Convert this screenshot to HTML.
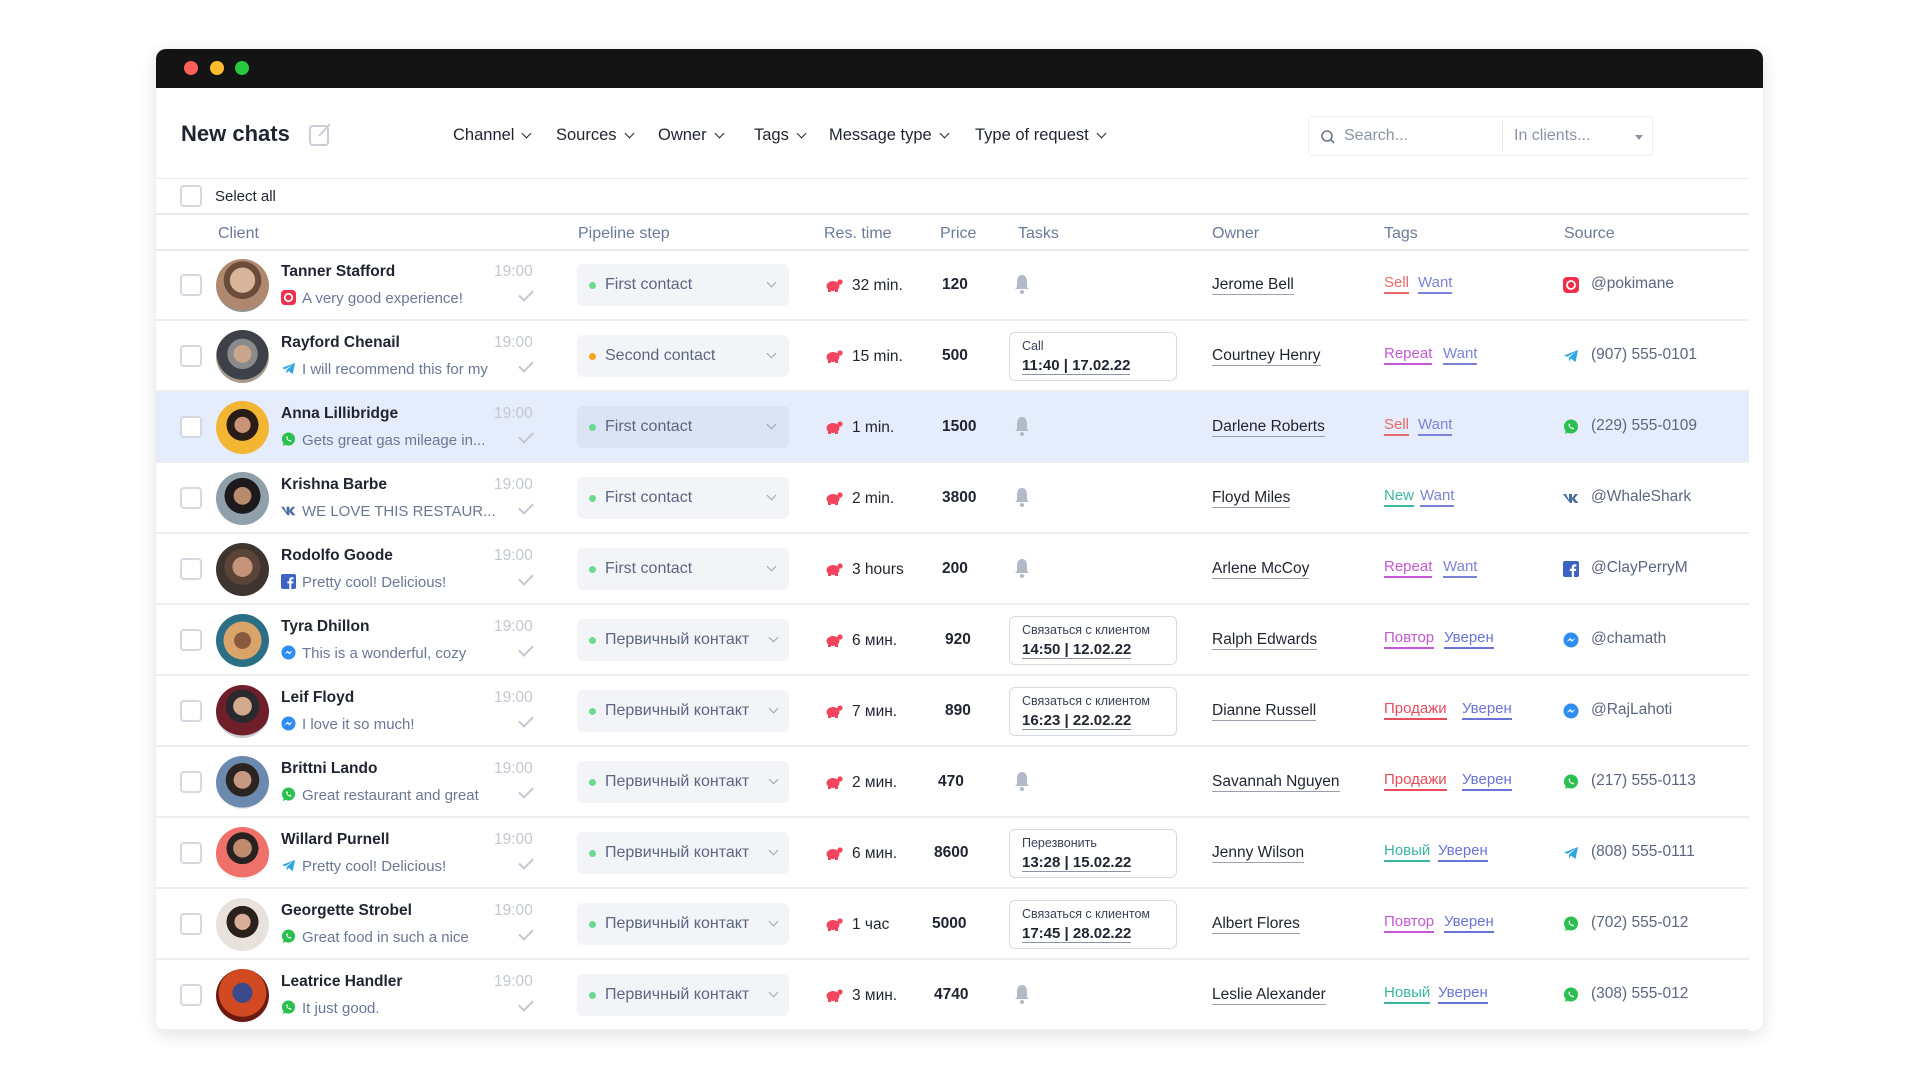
<!DOCTYPE html>
<html><head><meta charset="utf-8"><style>
*{margin:0;padding:0;box-sizing:border-box}
body{width:1920px;height:1080px;background:#fff;font-family:"Liberation Sans","DejaVu Sans",sans-serif;position:relative;overflow:hidden;color:#1f2430}
.win{position:absolute;left:156px;top:49px;width:1607px;height:982px;background:#fff;border-radius:10px;box-shadow:0 4px 18px rgba(0,0,0,.12);overflow:hidden}
.bar{position:absolute;left:0;top:0;width:100%;height:39px;background:#141414}
.dot{position:absolute;top:12px;width:14px;height:14px;border-radius:50%}
.a{position:absolute;white-space:nowrap}
.hl{position:absolute;left:0;width:1593px;height:1px;background:#e8eaef}
.f{font-size:16.5px;color:#1f2430;top:77px}
.f:after{content:"";display:inline-block;width:6px;height:6px;border-right:1.8px solid #1f2430;border-bottom:1.8px solid #1f2430;transform:rotate(45deg);margin-left:9px;position:relative;top:-3px}
.th{font-size:16px;color:#6b7a99;top:176px}
.row{position:absolute;left:0;width:1593px;height:71px;border-bottom:2px solid #eceef2}
.row.sel{background:#e5edfc}
.cb{position:absolute;left:24px;top:24px;width:22px;height:22px;border:2px solid #d4d8e0;border-radius:4px;background:#fff}
.av{position:absolute;left:60px;top:9px;width:53px;height:53px;border-radius:50%}
.nm{left:125px;top:13px;font-size:15.5px;font-weight:bold;color:#1f2430}
.tm{left:338px;top:13px;font-size:15.5px;color:#c2c7d2}
.ms{left:125px;top:40px;font-size:15px;color:#6b7794}
.ck{left:363px;top:40px;width:14px;height:8px;border-left:2px solid #c2c7d2;border-bottom:2px solid #c2c7d2;transform:rotate(-45deg)}
.pp{position:absolute;left:421px;top:14px;width:212px;height:42px;background:#f3f4f7;border-radius:6px;font-size:16px;color:#5c6680;padding:12px 0 0 28px;white-space:nowrap}
.sel .pp{background:#dbe4f5}
.pp:before{content:"";position:absolute;left:12px;top:18px;width:7px;height:7px;border-radius:50%;background:#6cd991}
.pp.o:before{background:#f5a623}
.pp:after{content:"";position:absolute;right:14px;top:15px;width:6px;height:6px;border-right:1.5px solid #9aa2b4;border-bottom:1.5px solid #9aa2b4;transform:rotate(45deg)}
.pp.r:after{right:12px}
.tu{position:absolute;left:669px;top:28px;width:18px;height:14px}
.rt{left:696px;top:27px;font-size:15.5px;color:#1f2430}
.pr{left:786px;top:26px;font-size:15.5px;font-weight:bold;color:#1f2430}
.bl{position:absolute;left:859px;top:24px;width:14px;height:20px}
.tb{position:absolute;left:853px;top:11px;width:168px;height:49px;border:1.5px solid #d6dae3;border-radius:6px;background:#fff}
.tb .l{position:absolute;left:12px;top:6px;font-size:12.5px;color:#3a4255;white-space:nowrap}
.tb .d{position:absolute;left:12px;top:24px;font-size:15px;font-weight:bold;color:#1f2430;border-bottom:1.5px solid #8d94a5;line-height:17px;white-space:nowrap}
.ow{left:1056px;top:26px;font-size:15.5px;color:#1f2430;border-bottom:1.5px solid #9aa0ae;line-height:18px}
.tg{top:24px;font-size:15px;line-height:18px;border-bottom:2px solid}
.si{position:absolute;left:1407px;top:27px;width:16px;height:16px}
.st{left:1435px;top:25px;font-size:15.5px;color:#5c6680}
</style></head><body>
<div class="win">
<div class="bar"><div class="dot" style="left:28px;background:#ff5f57"></div><div class="dot" style="left:54px;background:#febc2e"></div><div class="dot" style="left:79px;background:#28c840"></div></div>
<div class="a" style="left:25px;top:72px;font-size:22px;font-weight:bold;color:#1f2430">New chats</div>
<svg class="a" style="left:152px;top:72px" width="26" height="26" viewBox="0 0 26 26"><rect x="2" y="5" width="18" height="19" rx="3" fill="none" stroke="#c8cdd7" stroke-width="2"/><path d="M11 15 L22 3" stroke="#c8cdd7" stroke-width="2"/></svg>
<div class="a f" style="left:297px">Channel</div>
<div class="a f" style="left:400px">Sources</div>
<div class="a f" style="left:502px">Owner</div>
<div class="a f" style="left:598px">Tags</div>
<div class="a f" style="left:673px">Message type</div>
<div class="a f" style="left:819px">Type of request</div>
<div class="a" style="left:1152px;top:67px;width:345px;height:40px;border:1px solid #eceef2;border-radius:4px"></div>
<svg class="a" style="left:1164px;top:80px" width="16" height="16" viewBox="0 0 16 16"><circle cx="7" cy="7" r="5" fill="none" stroke="#6b7589" stroke-width="1.6"/><path d="M11 11 L14 14" stroke="#6b7589" stroke-width="1.6"/></svg>
<div class="a" style="left:1188px;top:78px;font-size:16px;color:#8a93a6">Search...</div>
<div class="a" style="left:1346px;top:72px;width:1px;height:30px;background:#e6e8ee"></div>
<div class="a" style="left:1358px;top:78px;font-size:16px;color:#8a93a6">In clients...</div>
<div class="a" style="left:1479px;top:86px;border:4px solid transparent;border-top:5px solid #8a93a6"></div>
<div class="hl" style="top:129px"></div>
<div class="a cb" style="left:24px;top:136px;position:absolute"></div>
<div class="a" style="left:59px;top:139px;font-size:15px;color:#1f2430">Select all</div>
<div class="hl" style="top:164px;height:2px"></div>
<div class="a th" style="left:62px">Client</div>
<div class="a th" style="left:422px">Pipeline step</div>
<div class="a th" style="left:668px">Res. time</div>
<div class="a th" style="left:784px">Price</div>
<div class="a th" style="left:862px">Tasks</div>
<div class="a th" style="left:1056px">Owner</div>
<div class="a th" style="left:1228px">Tags</div>
<div class="a th" style="left:1408px">Source</div>
<div class="hl" style="top:200px;height:2px"></div>

<svg width="0" height="0" style="position:absolute"><defs>
<symbol id="tu" viewBox="0 0 18 14"><ellipse cx="8" cy="8" rx="6.5" ry="5" fill="#f0455d"/><circle cx="15" cy="4" r="2.6" fill="#f0455d"/><rect x="3" y="10" width="3" height="4" fill="#f0455d"/><rect x="10" y="10" width="3" height="4" fill="#f0455d"/></symbol>
<symbol id="bl" viewBox="0 0 14 20"><path d="M7 1 C3 1 2 5 2 8 L2 13 L0 15 L14 15 L12 13 L12 8 C12 5 11 1 7 1Z" fill="#b2b9c7"/><circle cx="7" cy="18" r="2" fill="#b2b9c7"/></symbol>
<symbol id="tg" viewBox="0 0 16 16"><path d="M1 7.5 L15 2 L12.5 14 L8 10.5 L6 13.5 L6 9.5 L13 3.5 L4.5 8.8Z" fill="#2ea6e0"/></symbol>
<symbol id="wa" viewBox="0 0 16 16"><circle cx="8" cy="7.5" r="7" fill="#2bc04e"/><path d="M2 15 L3 11 L6 13Z" fill="#2bc04e"/><path d="M5.5 5 Q5.5 9.5 10.5 10.5 L11 9 L9.5 8.3 L9 9 Q7 8 6.8 6.5 L7.5 6 L6.8 4.5Z" fill="#fff"/></symbol>
<symbol id="ig" viewBox="0 0 16 16"><rect width="16" height="16" rx="4" fill="#f0304a"/><circle cx="8" cy="8" r="4" fill="none" stroke="#fff" stroke-width="1.8"/></symbol>
<symbol id="vk" viewBox="0 0 16 16"><path d="M0 4 L3 4 L6 10 L6 4 L9 4 L9 8 L12 4 L15 4 L11.5 8.5 L15.5 13 L12 13 L9 9.5 L9 13 L7 13 Z" fill="#4a6aa0"/></symbol>
<symbol id="fb" viewBox="0 0 16 16"><rect width="16" height="16" rx="2" fill="#3b62c4"/><path d="M11 16 L11 10 L13 10 L13.3 7.8 L11 7.8 L11 6.5 Q11 5.5 12 5.5 L13.4 5.5 L13.4 3.5 Q12.6 3.4 11.7 3.4 Q8.8 3.4 8.8 6.2 L8.8 7.8 L6.8 7.8 L6.8 10 L8.8 10 L8.8 16Z" fill="#fff"/></symbol>
<symbol id="ms" viewBox="0 0 16 16"><circle cx="8" cy="8" r="7.5" fill="#2f8cf0"/><path d="M3.5 10 L7 6 L9 8 L12.5 6 L9 10 L7 8Z" fill="#fff"/></symbol>
</defs></svg>

<div class="row" style="top:201px">
<div class="cb"></div><div class="av" style="background:radial-gradient(circle at 50% 40%,#d8b49a 0 30%,#6b4b3a 31% 45%,#b08870 46% 70%,#9a9088 71%)"></div>
<div class="a nm">Tanner Stafford</div><div class="a tm">19:00</div>
<div class="a ms"><svg width="15" height="15" style="vertical-align:-2px;margin-right:6px"><use href="#ig"/></svg>A very good experience!</div><div class="a ck"></div>
<div class="pp">First contact</div>
<svg class="tu"><use href="#tu"/></svg><div class="a rt">32 min.</div><div class="a pr">120</div>
<svg class="bl"><use href="#bl"/></svg>
<div class="a ow">Jerome Bell</div>
<div class="a tg" style="left:1228px;color:#e86a6a">Sell</div><div class="a tg" style="left:1262px;color:#7b83d6">Want</div>
<svg class="si"><use href="#ig"/></svg><div class="a st">@pokimane</div>
</div>

<div class="row" style="top:272px">
<div class="cb"></div><div class="av" style="background:radial-gradient(circle at 50% 45%,#c9a58c 0 22%,#8a8a8a 23% 38%,#3e4248 39% 65%,#a89a8e 66%)"></div>
<div class="a nm">Rayford Chenail</div><div class="a tm">19:00</div>
<div class="a ms"><svg width="15" height="15" style="vertical-align:-2px;margin-right:6px"><use href="#tg"/></svg>I will recommend this for my</div><div class="a ck"></div>
<div class="pp o">Second contact</div>
<svg class="tu"><use href="#tu"/></svg><div class="a rt">15 min.</div><div class="a pr">500</div>
<div class="tb"><div class="l">Call</div><div class="d">11:40 | 17.02.22</div></div>
<div class="a ow">Courtney Henry</div>
<div class="a tg" style="left:1228px;color:#c558d6">Repeat</div><div class="a tg" style="left:1287px;color:#7b83d6">Want</div>
<svg class="si"><use href="#tg"/></svg><div class="a st">(907) 555-0101</div>
</div>

<div class="row sel" style="top:343px">
<div class="cb"></div><div class="av" style="background:radial-gradient(circle at 50% 45%,#c89478 0 20%,#2a1d18 21% 40%,#f2b632 41%)"></div>
<div class="a nm">Anna Lillibridge</div><div class="a tm">19:00</div>
<div class="a ms"><svg width="15" height="15" style="vertical-align:-2px;margin-right:6px"><use href="#wa"/></svg>Gets great gas mileage in...</div><div class="a ck"></div>
<div class="pp">First contact</div>
<svg class="tu"><use href="#tu"/></svg><div class="a rt">1 min.</div><div class="a pr">1500</div>
<svg class="bl"><use href="#bl"/></svg>
<div class="a ow">Darlene Roberts</div>
<div class="a tg" style="left:1228px;color:#e86a6a">Sell</div><div class="a tg" style="left:1262px;color:#7b83d6">Want</div>
<svg class="si"><use href="#wa"/></svg><div class="a st">(229) 555-0109</div>
</div>

<div class="row" style="top:414px">
<div class="cb"></div><div class="av" style="background:radial-gradient(circle at 50% 45%,#b88a6c 0 22%,#1c1a1c 23% 45%,#8fa0aa 46%)"></div>
<div class="a nm">Krishna Barbe</div><div class="a tm">19:00</div>
<div class="a ms"><svg width="15" height="15" style="vertical-align:-2px;margin-right:6px"><use href="#vk"/></svg>WE LOVE THIS RESTAUR...</div><div class="a ck"></div>
<div class="pp">First contact</div>
<svg class="tu"><use href="#tu"/></svg><div class="a rt">2 min.</div><div class="a pr">3800</div>
<svg class="bl"><use href="#bl"/></svg>
<div class="a ow">Floyd Miles</div>
<div class="a tg" style="left:1228px;color:#3bb5a0">New</div><div class="a tg" style="left:1264px;color:#7b83d6">Want</div>
<svg class="si"><use href="#vk"/></svg><div class="a st">@WhaleShark</div>
</div>

<div class="row" style="top:485px">
<div class="cb"></div><div class="av" style="background:radial-gradient(circle at 50% 45%,#c49378 0 25%,#5a4438 26% 45%,#3e3530 46%)"></div>
<div class="a nm">Rodolfo Goode</div><div class="a tm">19:00</div>
<div class="a ms"><svg width="15" height="15" style="vertical-align:-2px;margin-right:6px"><use href="#fb"/></svg>Pretty cool! Delicious!</div><div class="a ck"></div>
<div class="pp">First contact</div>
<svg class="tu"><use href="#tu"/></svg><div class="a rt">3 hours</div><div class="a pr">200</div>
<svg class="bl"><use href="#bl"/></svg>
<div class="a ow">Arlene McCoy</div>
<div class="a tg" style="left:1228px;color:#c558d6">Repeat</div><div class="a tg" style="left:1287px;color:#7b83d6">Want</div>
<svg class="si"><use href="#fb"/></svg><div class="a st">@ClayPerryM</div>
</div>

<div class="row" style="top:556px">
<div class="cb"></div><div class="av" style="background:radial-gradient(circle at 50% 50%,#8a5a40 0 22%,#d9a36a 23% 50%,#2a6f86 51%)"></div>
<div class="a nm">Tyra Dhillon</div><div class="a tm">19:00</div>
<div class="a ms"><svg width="15" height="15" style="vertical-align:-2px;margin-right:6px"><use href="#ms"/></svg>This is a wonderful, cozy</div><div class="a ck"></div>
<div class="pp r">Первичный контакт</div>
<svg class="tu"><use href="#tu"/></svg><div class="a rt">6 мин.</div><div class="a pr" style="left:789px">920</div>
<div class="tb"><div class="l">Связаться с клиентом</div><div class="d">14:50 | 12.02.22</div></div>
<div class="a ow">Ralph Edwards</div>
<div class="a tg" style="left:1228px;color:#c558d6">Повтор</div><div class="a tg" style="left:1288px;color:#6a73d8">Уверен</div>
<svg class="si"><use href="#ms"/></svg><div class="a st">@chamath</div>
</div>

<div class="row" style="top:627px">
<div class="cb"></div><div class="av" style="background:radial-gradient(circle at 50% 40%,#d2a88e 0 22%,#2a2a2e 23% 40%,#6e1f2a 41% 70%,#c7cdd2 71%)"></div>
<div class="a nm">Leif Floyd</div><div class="a tm">19:00</div>
<div class="a ms"><svg width="15" height="15" style="vertical-align:-2px;margin-right:6px"><use href="#ms"/></svg>I love it so much!</div><div class="a ck"></div>
<div class="pp r">Первичный контакт</div>
<svg class="tu"><use href="#tu"/></svg><div class="a rt">7 мин.</div><div class="a pr" style="left:789px">890</div>
<div class="tb"><div class="l">Связаться с клиентом</div><div class="d">16:23 | 22.02.22</div></div>
<div class="a ow">Dianne Russell</div>
<div class="a tg" style="left:1228px;color:#e64c5c">Продажи</div><div class="a tg" style="left:1306px;color:#6a73d8">Уверен</div>
<svg class="si"><use href="#ms"/></svg><div class="a st">@RajLahoti</div>
</div>

<div class="row" style="top:698px">
<div class="cb"></div><div class="av" style="background:radial-gradient(circle at 50% 45%,#c69a80 0 22%,#2c2420 23% 42%,#6c8ab0 43% 70%,#e8e6e2 71%)"></div>
<div class="a nm">Brittni Lando</div><div class="a tm">19:00</div>
<div class="a ms"><svg width="15" height="15" style="vertical-align:-2px;margin-right:6px"><use href="#wa"/></svg>Great restaurant and great</div><div class="a ck"></div>
<div class="pp r">Первичный контакт</div>
<svg class="tu"><use href="#tu"/></svg><div class="a rt">2 мин.</div><div class="a pr" style="left:782px">470</div>
<svg class="bl"><use href="#bl"/></svg>
<div class="a ow">Savannah Nguyen</div>
<div class="a tg" style="left:1228px;color:#e64c5c">Продажи</div><div class="a tg" style="left:1306px;color:#6a73d8">Уверен</div>
<svg class="si"><use href="#wa"/></svg><div class="a st">(217) 555-0113</div>
</div>

<div class="row" style="top:769px">
<div class="cb"></div><div class="av" style="background:radial-gradient(circle at 50% 40%,#c08a6c 0 22%,#2a2220 23% 38%,#f0706a 39% 70%,#f4f4f4 71%)"></div>
<div class="a nm">Willard Purnell</div><div class="a tm">19:00</div>
<div class="a ms"><svg width="15" height="15" style="vertical-align:-2px;margin-right:6px"><use href="#tg"/></svg>Pretty cool! Delicious!</div><div class="a ck"></div>
<div class="pp r">Первичный контакт</div>
<svg class="tu"><use href="#tu"/></svg><div class="a rt">6 мин.</div><div class="a pr" style="left:778px">8600</div>
<div class="tb"><div class="l">Перезвонить</div><div class="d">13:28 | 15.02.22</div></div>
<div class="a ow">Jenny Wilson</div>
<div class="a tg" style="left:1228px;color:#3bb5a0">Новый</div><div class="a tg" style="left:1282px;color:#6a73d8">Уверен</div>
<svg class="si"><use href="#tg"/></svg><div class="a st">(808) 555-0111</div>
</div>

<div class="row" style="top:840px">
<div class="cb"></div><div class="av" style="background:radial-gradient(circle at 50% 45%,#d8b09a 0 20%,#2a201c 21% 40%,#e8e2dc 41%)"></div>
<div class="a nm">Georgette Strobel</div><div class="a tm">19:00</div>
<div class="a ms"><svg width="15" height="15" style="vertical-align:-2px;margin-right:6px"><use href="#wa"/></svg>Great food in such a nice</div><div class="a ck"></div>
<div class="pp r">Первичный контакт</div>
<svg class="tu"><use href="#tu"/></svg><div class="a rt">1 час</div><div class="a pr" style="left:776px">5000</div>
<div class="tb"><div class="l">Связаться с клиентом</div><div class="d">17:45 | 28.02.22</div></div>
<div class="a ow">Albert Flores</div>
<div class="a tg" style="left:1228px;color:#c558d6">Повтор</div><div class="a tg" style="left:1288px;color:#6a73d8">Уверен</div>
<svg class="si"><use href="#wa"/></svg><div class="a st">(702) 555-012</div>
</div>

<div class="row" style="top:911px">
<div class="cb"></div><div class="av" style="background:radial-gradient(circle at 50% 45%,#3a4a8a 0 25%,#d24a22 26% 60%,#6a1a10 61%)"></div>
<div class="a nm">Leatrice Handler</div><div class="a tm">19:00</div>
<div class="a ms"><svg width="15" height="15" style="vertical-align:-2px;margin-right:6px"><use href="#wa"/></svg>It just good.</div><div class="a ck"></div>
<div class="pp r">Первичный контакт</div>
<svg class="tu"><use href="#tu"/></svg><div class="a rt">3 мин.</div><div class="a pr" style="left:778px">4740</div>
<svg class="bl"><use href="#bl"/></svg>
<div class="a ow">Leslie Alexander</div>
<div class="a tg" style="left:1228px;color:#3bb5a0">Новый</div><div class="a tg" style="left:1282px;color:#6a73d8">Уверен</div>
<svg class="si"><use href="#wa"/></svg><div class="a st">(308) 555-012</div>
</div>
</div>
</body></html>
